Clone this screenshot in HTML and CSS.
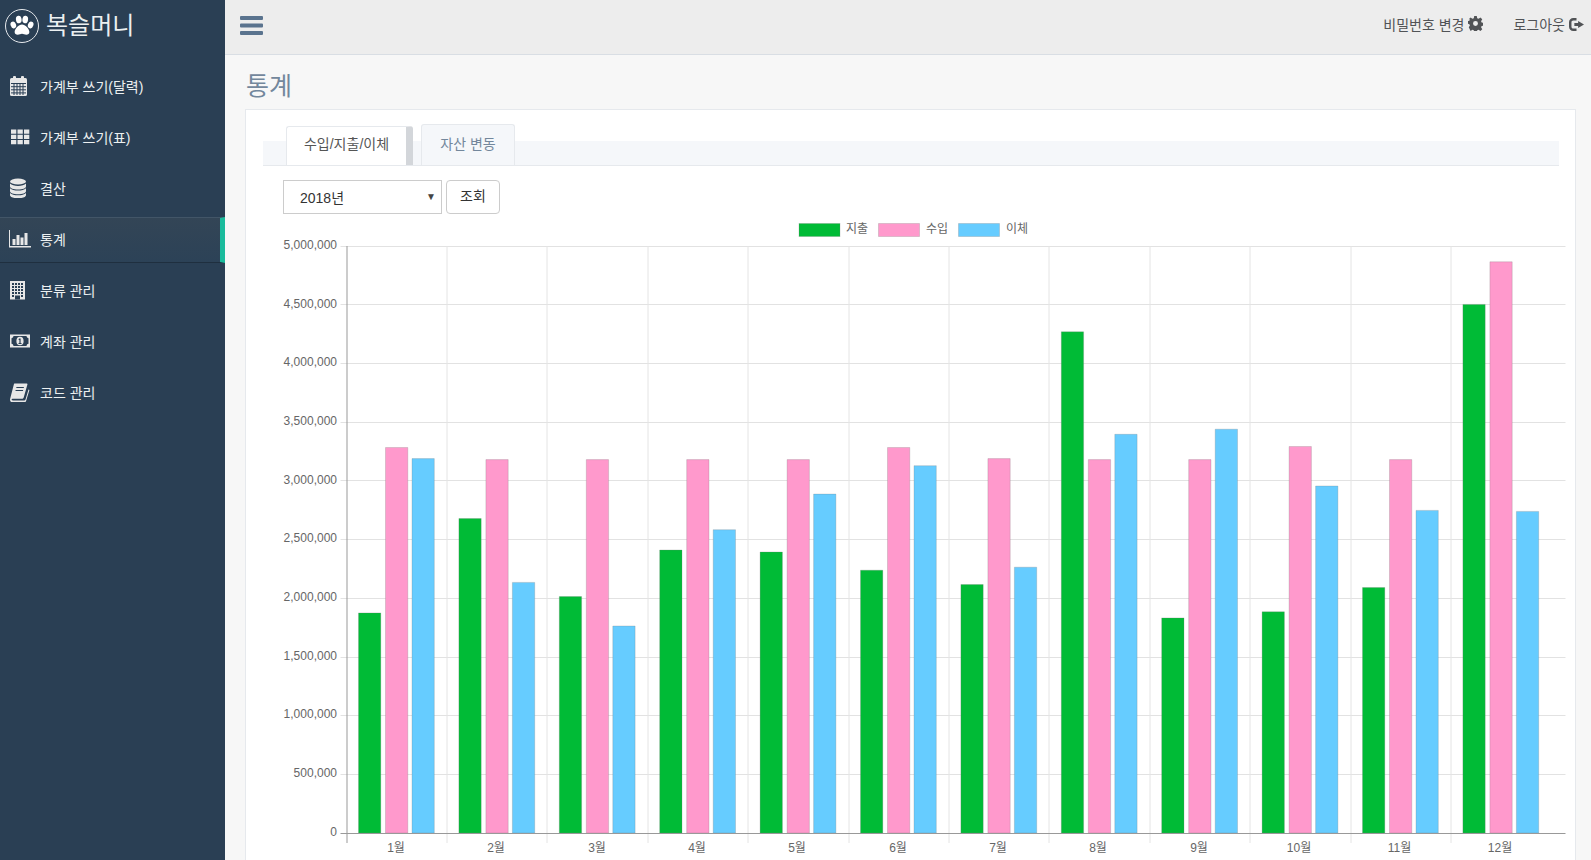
FILE: index.html
```html
<!DOCTYPE html>
<html lang="ko">
<head>
<meta charset="utf-8">
<title>복슬머니 - 통계</title>
<link rel="stylesheet" href="styles.css">
</head>
<body>
<div class="app">
  <aside class="sidebar">
    <div class="brand">
      <span class="brand-logo">
        <svg viewBox="0 0 24 24" width="26" height="26" class="fill-white">
          <ellipse cx="4" cy="11" rx="2.5" ry="3.2" transform="rotate(-20 4 11)"/>
          <ellipse cx="9" cy="6" rx="2.6" ry="3.5" transform="rotate(-8 9 6)"/>
          <ellipse cx="15" cy="6" rx="2.6" ry="3.5" transform="rotate(8 15 6)"/>
          <ellipse cx="20" cy="11" rx="2.5" ry="3.2" transform="rotate(20 20 11)"/>
          <path d="M12 10.5c-3 0-6.8 4-6.8 7 0 1.7 1.2 2.5 2.8 2.5 1.700 0 2.600-.8 4-.8s2.300.8 4 .8c1.600 0 2.800-.8 2.800-2.500 0-3-3.800-7-6.800-7z"/>
        </svg>
      </span>
      <span class="brand-name">복슬머니</span>
    </div>
    <ul class="menu">
      <li class="menu-item">
        <svg class="menu-icon" viewBox="0 0 20 20" width="20" height="20">
          <rect class="ic" x="0" y="2" width="17" height="18" rx="1.500"/>
          <rect class="ic" x="3" y="0" width="3" height="5" rx="1"/>
          <rect class="ic" x="11" y="0" width="3" height="5" rx="1"/>
          <path class="ic-line" d="M1 7.500h15M1 10.700h15M1 13.800h15M1 16.900h15M4 7.500v11.500M7 7.500v11.500M10 7.500v11.500M13 7.500v11.500"/>
        </svg>
        <span>가계부 쓰기(달력)</span>
      </li>
      <li class="menu-item">
        <svg class="menu-icon" viewBox="0 0 20 20" width="20" height="20">
          <path class="ic" d="M1 2.500h5.300v4.200H1zM7.500 2.500h5.300v4.200H7.500zM14 2.500h5.300v4.200H14zM1 7.800h5.300v4.200H1zM7.500 7.800h5.300v4.200H7.500zM14 7.800h5.300v4.200H14zM1 13.100h5.300v4.200H1zM7.500 13.100h5.300v4.200H7.500zM14 13.100h5.300v4.200H14z"/>
        </svg>
        <span>가계부 쓰기(표)</span>
      </li>
      <li class="menu-item">
        <svg class="menu-icon" viewBox="0 0 20 20" width="20" height="20">
          <ellipse class="ic" cx="8" cy="3.500" rx="8" ry="3"/>
          <path class="ic" d="M0 5.500c1.500 1.700 4.500 2.400 8 2.400s6.500-.7 8-2.400v3c0 1.700-3.600 3-8 3s-8-1.300-8-3zM0 10.200c1.500 1.700 4.500 2.400 8 2.400s6.500-.7 8-2.400v3c0 1.700-3.600 3-8 3s-8-1.300-8-3zM0 14.900c1.500 1.700 4.500 2.400 8 2.400s6.500-.7 8-2.400v2.400c0 1.700-3.600 3-8 3s-8-1.300-8-3z"/>
        </svg>
        <span>결산</span>
      </li>
      <li class="menu-item is-active">
        <svg class="menu-icon menu-icon-wide" viewBox="0 0 22 18" width="22" height="18">
          <path class="ic" d="M0 0h1v16h21v1.500H0zM3.500 9h3v6h-3zM7.500 5h3v10h-3zM11.500 7.500h3V15h-3zM15.500 3h3v12h-3z"/>
        </svg>
        <span>통계</span>
      </li>
      <li class="menu-item">
        <svg class="menu-icon" viewBox="0 0 20 20" width="20" height="20">
          <rect class="ic" x="0" y="1" width="15" height="18.500"/>
          <path class="ic-dots" d="M2 3h2v2H2zM5 3h2v2H5zM8 3h2v2H8zM11 3h2v2h-2zM2 6h2v2H2zM5 6h2v2H5zM8 6h2v2H8zM11 6h2v2h-2zM2 9h2v2H2zM5 9h2v2H5zM8 9h2v2H8zM11 9h2v2h-2zM2 12h2v2H2zM5 12h2v2H5zM8 12h2v2H8zM11 12h2v2h-2zM5 15.500h5v4H5zM2 15h2v2H2zM11 15h2v2h-2z"/>
        </svg>
        <span>분류 관리</span>
      </li>
      <li class="menu-item">
        <svg class="menu-icon" viewBox="0 0 20 20" width="20" height="20">
          <rect class="ic" x="0" y="3.500" width="20" height="13"/>
          <path class="ic-dots" d="M3.500 5h13c.3 1.500 1 2 2 2.200v5.600c-1 .2-1.700.7-2 2.200h-13c-.3-1.500-1-2-2-2.200V7.200c1-.2 1.700-.7 2-2.200z"/>
          <ellipse class="ic" cx="10" cy="10" rx="3.600" ry="4.300"/>
          <path class="ic-dots" d="M9 7.500h1.600v4.500h.9v1H8.500v-1h.9V9H8.500z"/>
        </svg>
        <span>계좌 관리</span>
      </li>
      <li class="menu-item">
        <svg class="menu-icon" viewBox="0 0 20 20" width="20" height="20">
          <path class="ic" d="M4.500 1.500h12.300c.5 0 .8.400.6 1L13.700 15.500c-.3.900-.9 1.300-1.800 1.300H2.500c-.8 0-1.200.8-.6 1.300.2.200.5.300 1 .3h11.300c.6 0 1-.3 1.300-1l3-10 .9.600-3.300 11c-.3.900-1.100 1.500-2 1.500H2.500C1 20.500 0 19 0 17.500c0-.4.100-.7.200-1.100L3.700 3c.2-.8.400-1.500.8-1.500z"/>
          <path class="ic-dots" d="M6.500 5h7.500l-.3 1H6.200zM5.700 8h7.500l-.3 1H5.400z"/>
        </svg>
        <span>코드 관리</span>
      </li>
    </ul>
  </aside>

  <div class="main">
    <header class="topbar">
      <svg class="burger" viewBox="0 0 23 19" width="23" height="19">
        <path d="M1 0h21a1 1 0 0 1 1 1v2a1 1 0 0 1-1 1H1a1 1 0 0 1-1-1V1a1 1 0 0 1 1-1zM1 7.500h21a1 1 0 0 1 1 1v2a1 1 0 0 1-1 1H1a1 1 0 0 1-1-1v-2a1 1 0 0 1 1-1zM1 15h21a1 1 0 0 1 1 1v2a1 1 0 0 1-1 1H1a1 1 0 0 1-1-1v-2a1 1 0 0 1 1-1z"/>
      </svg>
      <nav class="top-links">
        <a class="top-link">비밀번호 변경
          <svg viewBox="0 0 14 14" width="15" height="15">
            <path fill-rule="evenodd" d="M5.800 0h2.400l.4 2 1.300.5L11.600 1.400l1.700 1.700-1.100 1.700.5 1.300 2 .4v2.400l-2 .4-.5 1.300 1.100 1.700-1.700 1.700-1.700-1.100-1.300.5-.4 2H5.800l-.4-2-1.300-.5-1.700 1.100L.7 10.600l1.100-1.700-.5-1.300-2-.4V4.800l2-.4.5-1.300L.7 3.100l1.700-1.700 1.700 1.100 1.300-.5zM7 4.700a2.300 2.300 0 1 0 0 4.600 2.300 2.300 0 0 0 0-4.600z"/>
          </svg>
        </a>
        <a class="top-link">로그아웃
          <svg class="logout-icon" viewBox="0 0 14 14" width="15" height="15">
            <path d="M4 1h3v2.200H4c-1 0-1.700.7-1.700 1.700v4.200c0 1 .7 1.700 1.700 1.700h3V13H4c-2.200 0-4-1.800-4-4V5c0-2.200 1.800-4 4-4zM8.500 3.800L14 7l-5.500 3.200V8.400H5V5.600h3.500z"/>
          </svg>
        </a>
      </nav>
    </header>

    <main class="content">
      <h1 class="page-title">통계</h1>
      <section class="panel">
        <div class="tabs">
          <div class="tab tab-active">수입/지출/이체</div>
          <div class="tab">자산 변동</div>
        </div>
        <form class="filter">
          <span class="select-wrap">
            <select class="year-select"><option>2018년</option></select>
          </span>
          <button type="button" class="search-btn">조회</button>
        </form>
        <svg class="chart" viewBox="246.500 218 1329 642" width="1329" height="642">
          <g class="legend">
            <rect class="s-green" x="799.500" y="223.500" width="41" height="13"/>
            <text x="846.500" y="233">지출</text>
            <rect class="s-pink" x="878.500" y="223.500" width="41" height="13"/>
            <text x="926.500" y="233">수입</text>
            <rect class="s-blue" x="958.500" y="223.500" width="41" height="13"/>
            <text x="1006.500" y="233">이체</text>
          </g>
          <path class="grid-h" d="M341 246.500H1566M341 304.500H1566M341 363.500H1566M341 422.500H1566M341 480.500H1566M341 539.500H1566M341 598.500H1566M341 657.500H1566M341 715.500H1566M341 774.500H1566"/>
          <path class="grid-v" d="M447.500 246V843M547.500 246V843M648.500 246V843M748.500 246V843M849.500 246V843M949.500 246V843M1049.500 246V843M1150.500 246V843M1250.500 246V843M1351.500 246V843M1451.500 246V843"/>
          <path class="s-green" d="M359 612.900h22.300V833h-22.300zM459.400 518.500h22.300V833h-22.300zM559.800 596.600h22.300V833h-22.300zM660.200 550h22.300V833h-22.300zM760.600 552h22.300V833h-22.300zM861 570.200h22.300V833H861zM961.400 584.500h22.300V833h-22.300zM1061.800 331.800h22.300V833h-22.300zM1162.200 617.900h22.300V833h-22.300zM1262.600 611.800h22.300V833h-22.300zM1363 587.500h22.300V833H1363zM1463.400 304.400h22.300V833h-22.300z"/>
          <path class="s-pink" d="M385.500 447.500h22.300V833h-22.300zM485.900 459.600h22.300V833h-22.300zM586.300 459.600h22.300V833h-22.300zM686.700 459.600h22.300V833h-22.300zM787.100 459.600h22.300V833h-22.300zM887.500 447.500h22.300V833h-22.300zM987.900 458.600h22.300V833h-22.300zM1088.300 459.600h22.300V833h-22.300zM1188.700 459.600h22.300V833h-22.300zM1289.100 446.500h22.300V833h-22.300zM1389.500 459.600h22.300V833h-22.300zM1489.900 261.800h22.300V833h-22.300z"/>
          <path class="s-blue" d="M412 458.600h22.300V833H412zM512.400 582.400h22.300V833h-22.300zM612.800 626h22.300V833h-22.300zM713.200 529.700h22.300V833h-22.300zM813.600 494.100h22.300V833h-22.300zM914 465.700h22.300V833H914zM1014.400 567.200h22.300V833h-22.300zM1114.800 434.300h22.300V833h-22.300zM1215.200 429.200h22.300V833h-22.300zM1315.600 486h22.300V833h-22.300zM1416 510.400h22.300V833H1416zM1516.400 511.400h22.300V833h-22.300z"/>
          <path class="axis" d="M347.500 246V843M341 833.500H1566"/>
          <g class="y-labels">
            <text x="337.500" y="249">5,000,000</text>
            <text x="337.500" y="308">4,500,000</text>
            <text x="337.500" y="366">4,000,000</text>
            <text x="337.500" y="425">3,500,000</text>
            <text x="337.500" y="484">3,000,000</text>
            <text x="337.500" y="542">2,500,000</text>
            <text x="337.500" y="601">2,000,000</text>
            <text x="337.500" y="660">1,500,000</text>
            <text x="337.500" y="718">1,000,000</text>
            <text x="337.500" y="777">500,000</text>
            <text x="337.500" y="836">0</text>
          </g>
          <g class="x-labels">
            <text x="396.500" y="852">1월</text>
            <text x="496.500" y="852">2월</text>
            <text x="597.500" y="852">3월</text>
            <text x="697.500" y="852">4월</text>
            <text x="797.500" y="852">5월</text>
            <text x="898.500" y="852">6월</text>
            <text x="998.500" y="852">7월</text>
            <text x="1098.500" y="852">8월</text>
            <text x="1199.500" y="852">9월</text>
            <text x="1299.500" y="852">10월</text>
            <text x="1400" y="852">11월</text>
            <text x="1500.500" y="852">12월</text>
          </g>
        </svg>
      </section>
    </main>
  </div>
</div>
</body>
</html>
```

FILE: styles.css
```css
* { box-sizing: border-box; }
html, body { margin: 0; height: 100%; overflow: hidden; }
body {
  font-family: "Liberation Sans", "Noto Sans CJK KR", sans-serif;
  font-size: 13px;
  color: #73879c;
  background: #f7f7f7;
}
.app { display: flex; width: 1591px; height: 860px; overflow: hidden; }

/* sidebar */
.sidebar { flex: 0 0 225px; background: #2a3f54; color: #ecf0f1; }
.brand { display: flex; align-items: center; height: 52px; padding-left: 5px; }
.brand-logo {
  display: flex; align-items: center; justify-content: center;
  width: 34px; height: 34px;
  border: 1px solid #e6e9ed; border-radius: 50%;
}
.fill-white { fill: #fff; }
.brand-name { margin: 0 0 6px 7px; font-size: 24px; color: #ecf0f1; }
.menu { list-style: none; margin: 12px 0 0; padding: 0; }
.menu-item {
  display: flex; align-items: center;
  height: 46px; margin-bottom: 5px; padding: 0 0 3px 10px;
  font-size: 14px;
  color: #ecf0f1;
}
.menu-item span { margin-left: 10px; }
.menu-icon { flex: none; }
.menu-icon-wide { margin-left: -1px; margin-right: -1px; }
.ic { fill: #e7e7e7; }
.ic-line { stroke: #2a3f54; stroke-width: 1; fill: none; }
.ic-dots { fill: #2a3f54; }
.is-active {
  background: linear-gradient(#334556, #2c4257);
  border-top: 1px solid #425567;
  border-bottom: 1px solid #1f2f3f;
  border-right: 5px solid #1abb9c;
}

/* top bar */
.main { flex: 1; min-width: 0; display: flex; flex-direction: column; }
.topbar {
  flex: 0 0 55px;
  display: flex; align-items: center; justify-content: space-between;
  padding: 0 7px 3px 15px;
  background: #ededed;
  border-bottom: 1px solid #d9dee4;
}
.burger { fill: #5a738e; }
.top-links { display: flex; gap: 30px; font-size: 14px; margin-bottom: 4px; }
.top-link { display: flex; align-items: center; gap: 4px; color: #515356; white-space: nowrap; }
.top-link svg { fill: #515356; }
.top-link .logout-icon { margin-top: 2px; }

/* content */
.content { flex: 1; padding: 0 15px 0 20px; }
.page-title { margin: 16px 0 8px 1px; height: 30px; line-height: 30px; font-size: 25px; font-weight: 400; color: #73879c; }
.panel { height: 800px; background: #fff; border: 1px solid #e6e9ed; padding-top: 14px; }
.tabs {
  display: flex; align-items: flex-end; gap: 8px;
  height: 42px;
  margin: 0 16px 0 17px;
  padding-left: 23px;
  background: linear-gradient(transparent 17px, #f5f7fa 17px);
  border-bottom: 1px solid #e6e9ed;
}
.tab {
  display: flex; align-items: center; justify-content: center;
  width: 94px; height: 41px;
  padding-bottom: 5px;
  background: #f5f7fa;
  border: 1px solid #e6e9ed; border-bottom: 0;
  border-radius: 3px 3px 0 0;
  font-size: 14px;
  color: #73879c;
}
.tab-active {
  width: 127px; height: 39px;
  padding-bottom: 6px;
  background: #fff; color: #555;
  border-right: 7px solid #d3d6da;
}

/* filter */
.filter { display: flex; gap: 4px; height: 34px; margin: 14px 0 0 37px; }
.select-wrap { position: relative; display: block; width: 159px; }
.select-wrap::after {
  content: "▼"; position: absolute; right: 6px; top: 12px;
  font-size: 10px; line-height: 10px; color: #444;
}
.year-select {
  appearance: none;
  width: 100%; height: 34px;
  padding: 2px 16px 0;
  background: #fff; color: #333;
  border: 1px solid #ccc; border-radius: 0;
  font: inherit; font-size: 14px;
}
.search-btn {
  width: 54px; height: 34px; padding: 0 0 4px;
  background: #fff; color: #333;
  border: 1px solid #ccc; border-radius: 4px;
  font: inherit; font-size: 14px;
}

/* chart */
.chart { display: block; margin-top: 4px; }
.chart text { font-family: "Liberation Sans", "Noto Sans CJK KR", sans-serif; font-size: 12px; fill: #666; }
.y-labels text { text-anchor: end; }
.x-labels text { text-anchor: middle; }
.grid-h { stroke: #e2e2e2; stroke-width: 1; fill: none; }
.grid-v { stroke: #e4e4e4; stroke-width: 1; fill: none; }
.axis { stroke: #999; stroke-width: 1; fill: none; }
.s-green, .s-pink, .s-blue { stroke: rgba(120, 120, 120, .25); stroke-width: 1; }
.s-pink, .s-blue { transform: translateX(.5px); }
.s-green { fill: #00bb36; }
.s-pink { fill: #ff99cc; }
.s-blue { fill: #66ccff; }
```
